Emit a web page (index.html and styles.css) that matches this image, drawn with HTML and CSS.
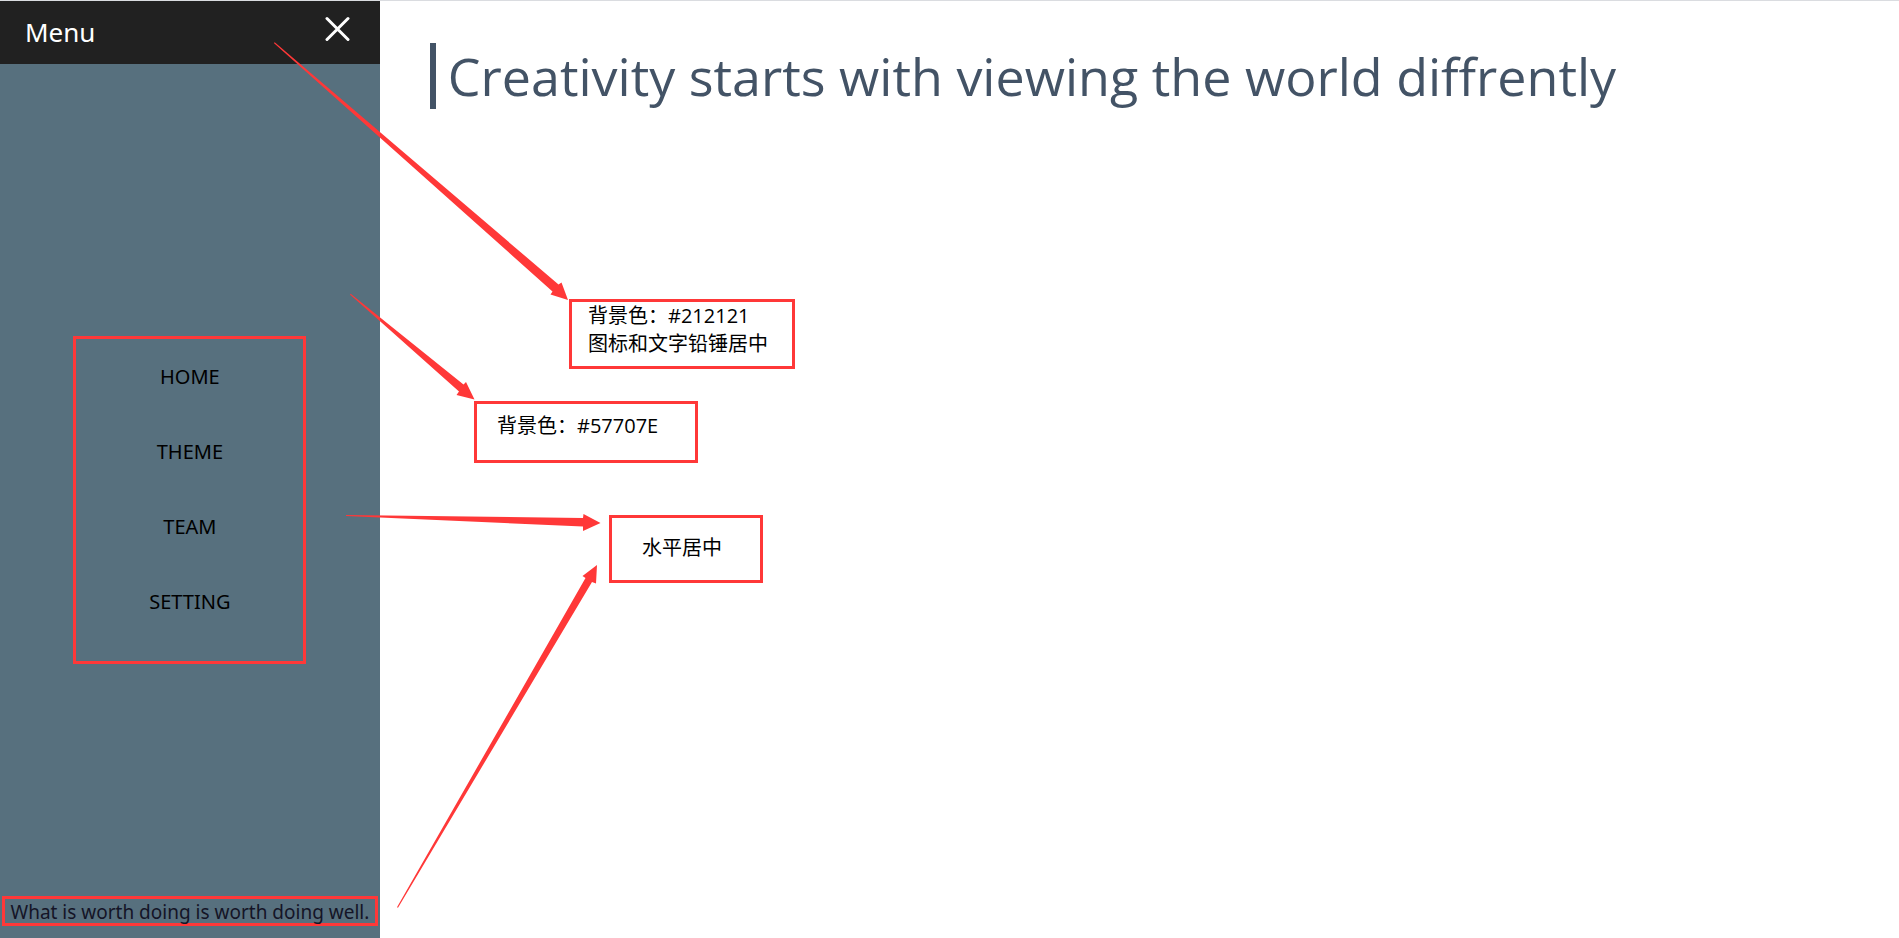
FILE: index.html
```html
<!DOCTYPE html>
<html lang="en">
<head>
<meta charset="utf-8">
<title>Menu</title>
<link rel="stylesheet" href="styles.css">
</head>
<body>
<div class="page">
  <aside class="sidebar">
    <header class="sidebar-header">
      <span class="sidebar-title">Menu</span>
      <button class="close" type="button" aria-label="Close menu">
        <svg width="26" height="26" viewBox="0 0 26 26"><path d="M3 2.5 24 23.5M24 2.5 3 23.5"/></svg>
      </button>
    </header>
    <nav class="menu">
      <ul class="menu-list">
        <li><a href="#">HOME</a></li>
        <li><a href="#">THEME</a></li>
        <li><a href="#">TEAM</a></li>
        <li><a href="#">SETTING</a></li>
      </ul>
    </nav>
    <footer class="motto">What is worth doing is worth doing well.</footer>
  </aside>
  <main class="content">
    <h1 class="headline">Creativity starts with viewing the world diffrently</h1>
  </main>

  <div class="note note-header" lang="zh">背景色：#212121<br>图标和文字铅锤居中</div>
  <div class="note note-sidebar" lang="zh">背景色：#57707E</div>
  <div class="note note-center" lang="zh">水平居中</div>
  <svg class="arrows" width="640" height="938" viewBox="0 0 640 938" aria-hidden="true">
    <path d="M274 43 274.7 42.2 558.5 284.5 561.5 282.5 568 300 550.5 294.5 552.5 291.5 273.8 43Z"/>
    <path d="M350 294.6 350.6 293.8 463.5 384.5 466 382 474.5 399.5 456.5 395 459 391.5Z"/>
    <path d="M346 515 583 518 583.5 514 600.5 523 583 531 583 526.5 346 516Z"/>
    <path d="M397 907.3 585.5 578 582.5 576 597 565 596 583.5 592 582 398 907.8Z"/>
  </svg>
</div>
</body>
</html>
```
FILE: styles.css
```css
* {
  box-sizing: border-box;
}

body {
  margin: 0;
  background: #fff;
  color: #000;
  font-family: "Open Sans", "Noto Sans CJK SC", sans-serif;
  font-size: 20px;
}

.page {
  position: relative;
  display: flex;
  min-height: 100vh;
  border-top: 1px solid #dadce0;
}

.sidebar {
  display: flex;
  flex-direction: column;
  align-items: center;
  width: 20%;
  padding-bottom: 12px;
  background: #57707e;
  font-family: "Noto Sans", sans-serif;
}

.sidebar-header {
  display: flex;
  align-items: center;
  justify-content: space-between;
  align-self: stretch;
  height: 63px;
  margin-bottom: 40px;
  padding: 0 30px 2px 25px;
  background: #212121;
  color: #fff;
}

.sidebar-title {
  font-size: 26px;
  line-height: 36px;
}

.close {
  display: flex;
  padding: 0 0 6px;
  border: 0;
  background: none;
  cursor: pointer;
}

.close path {
  fill: none;
  stroke: #fff;
  stroke-width: 3;
  stroke-linecap: round;
}

.menu {
  width: 233px;
  margin: auto;
  padding: 0 0 22px;
  border: 3px solid #ff3838;
}

.menu-list {
  margin: 0;
  padding: 0;
  list-style: none;
  text-align: center;
  line-height: 75px;
}

.menu a {
  display: block;
  color: inherit;
  text-decoration: none;
}

.motto {
  width: 376px;
  max-width: 100%;
  padding-top: 2px;
  border: 3px solid #ff3838;
  color: #141426;
  font-size: 19px;
  line-height: 22px;
  text-align: center;
  white-space: nowrap;
}

.content {
  flex: 1;
  padding: 42px 50px;
}

.headline {
  margin: 0;
  padding-left: 12px;
  border-left: 6px solid #435366;
  color: #435366;
  font-size: 52px;
  font-weight: 400;
  line-height: 66px;
}

.note {
  position: absolute;
  border: 3px solid #ff3838;
  line-height: 28px;
  white-space: nowrap;
}

.note-header {
  left: 569px;
  top: 298px;
  width: 226px;
  height: 70px;
  padding-left: 16px;
}

.note-sidebar {
  left: 474px;
  top: 400px;
  width: 224px;
  height: 62px;
  padding: 8px 0 0 20px;
}

.note-center {
  left: 609px;
  top: 514px;
  width: 154px;
  height: 68px;
  padding: 16px 0 0 30px;
}

.arrows {
  position: absolute;
  left: 0;
  top: -1px;
  fill: #ff3838;
  pointer-events: none;
}
```
